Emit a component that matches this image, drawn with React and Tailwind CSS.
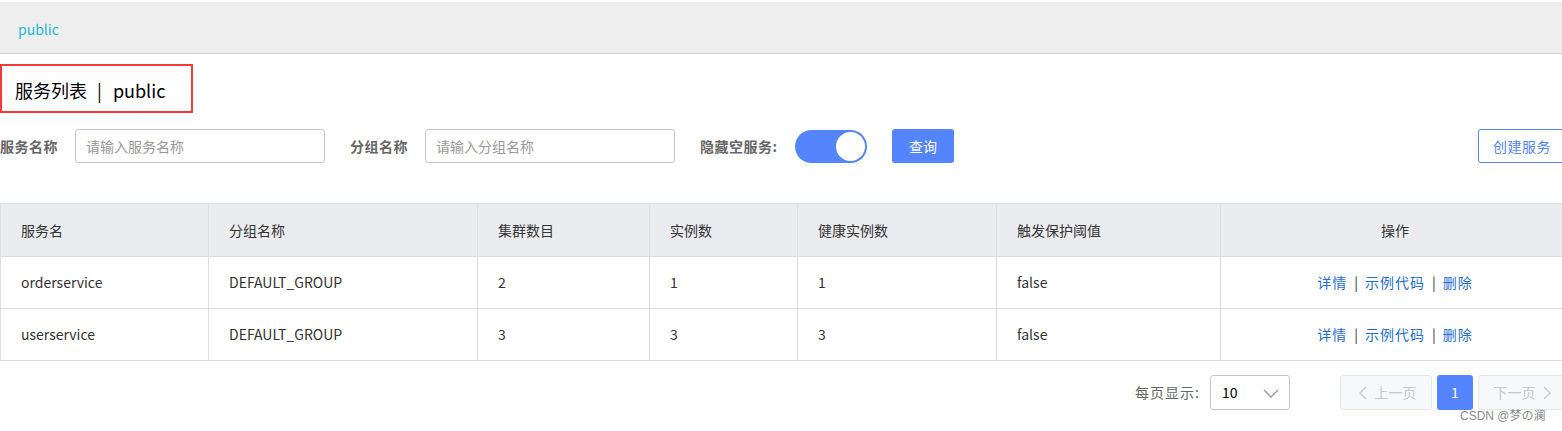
import React from 'react'

const rows = [
  { name: 'orderservice', group: 'DEFAULT_GROUP', clusters: 2, instances: 1, healthy: 1, threshold: 'false' },
  { name: 'userservice', group: 'DEFAULT_GROUP', clusters: 3, instances: 3, healthy: 3, threshold: 'false' },
]

const cols = [
  { title: '服务名', w: 'w-[208px]' },
  { title: '分组名称', w: 'w-[269px]' },
  { title: '集群数目', w: 'w-[172px]' },
  { title: '实例数', w: 'w-[148px]' },
  { title: '健康实例数', w: 'w-[199px]' },
  { title: '触发保护阈值', w: 'w-[224px]' },
]

const Chevron = ({ dir }) => {
  // thin chevrons like the console's pager
  const pts = {
    left: '10,2 4,8 10,14',
    right: '5,2 11,8 5,14',
    down: '1,5 8,12 15,5',
  }[dir]
  return (
    <svg width="16" height="16" viewBox="0 0 16 16" className="shrink-0">
      <polyline points={pts} fill="none" stroke="currentColor" strokeWidth="1.3" />
    </svg>
  )
}

const App = () => {
  return (
    <div className="relative w-[1562px] h-[431px] overflow-hidden bg-white text-[#333] text-[14px] font-['Noto_Sans_CJK_SC','Noto_Sans',sans-serif]">
      {/* breadcrumb bar */}
      <div className="mt-[2px] h-[52px] bg-[#eeeeee] border-b border-[#cfcfcf] flex items-center pl-[18px] pt-[3px]">
        <span className="text-[#1cb8d6]">public</span>
      </div>

      {/* page title */}
      <div className="mt-[10px] w-[193px] h-[49px] border-2 border-[#f53a3a] flex items-center pl-[13px] pt-[3px] text-[18px] text-black">
        服务列表<span className="ml-[10px] mr-[11px]">|</span>public
      </div>

      {/* filters */}
      <div className="mt-[16px] h-[34px] flex items-center">
        <span className="w-[75px] font-bold text-[#666] tracking-[0.5px]">服务名称</span>
        <div className="w-[250px] h-[34px] border border-[#c4c6cf] rounded-[3px] flex items-center px-[10px] text-[#999]">
          请输入服务名称
        </div>
        <span className="ml-[25px] w-[75px] font-bold text-[#666] tracking-[0.5px]">分组名称</span>
        <div className="w-[250px] h-[34px] border border-[#c4c6cf] rounded-[3px] flex items-center px-[10px] text-[#999]">
          请输入分组名称
        </div>
        <span className="ml-[25px] w-[95px] font-bold text-[#666] tracking-[0.5px]">隐藏空服务:</span>
        <div className="w-[72px] h-[33px] rounded-full bg-[#5584ff] flex items-center justify-end p-[2px]">
          <div className="w-[29px] h-[29px] rounded-full bg-white" />
        </div>
        <button className="ml-[25px] w-[62px] h-[34px] rounded-[3px] bg-[#5584ff] text-white">查询</button>
        <div className="flex-1" />
        <button className="w-[88px] h-[34px] shrink-0 rounded-[3px] border border-[#5584ff] text-[#5584ff] bg-white mr-[-4px] whitespace-nowrap tracking-[0.5px]">
          创建服务
        </button>
      </div>

      {/* service table */}
      <table className="mt-[40px] w-[1570px] border-collapse table-fixed">
        <thead>
          <tr className="h-[53px] bg-[#ebecf0]">
            {cols.map((c) => (
              <th key={c.title} className={`${c.w} border border-[#dcdee3] font-normal text-left pl-[20px]`}>
                {c.title}
              </th>
            ))}
            <th className="border border-[#dcdee3] font-normal text-center">操作</th>
          </tr>
        </thead>
        <tbody>
          {rows.map((r) => (
            <tr key={r.name} className="h-[52px]">
              <td className="border border-[#dcdee3] pl-[20px]">{r.name}</td>
              <td className="border border-[#dcdee3] pl-[20px]">{r.group}</td>
              <td className="border border-[#dcdee3] pl-[20px]">{r.clusters}</td>
              <td className="border border-[#dcdee3] pl-[20px]">{r.instances}</td>
              <td className="border border-[#dcdee3] pl-[20px]">{r.healthy}</td>
              <td className="border border-[#dcdee3] pl-[20px]">{r.threshold}</td>
              <td className="border border-[#dcdee3] text-center">
                <span className="text-[#1f6fd6] tracking-[1px]">详情</span>
                <span className="mx-[7px]">|</span>
                <span className="text-[#1f6fd6] tracking-[1px]">示例代码</span>
                <span className="mx-[7px]">|</span>
                <span className="text-[#1f6fd6] tracking-[1px]">删除</span>
              </td>
            </tr>
          ))}
        </tbody>
      </table>

      {/* pagination */}
      <div className="mt-[14px] h-[35px] flex items-center justify-end">
        <span className="text-[#666] tracking-[1px]">每页显示:</span>
        <div className="ml-[10px] w-[80px] h-[35px] border border-[#c4c6cf] rounded-[3px] flex items-center justify-between pl-[11px] pr-[10px]">
          <span className="text-black">10</span>
          <span className="text-[#999]"><Chevron dir="down" /></span>
        </div>
        <button className="ml-[50px] w-[92px] h-[35px] rounded-[3px] border border-[#e6e7eb] bg-[#f7f8fa] text-[#c8c8c8] flex items-center justify-center gap-[3px]">
          <Chevron dir="left" />上一页
        </button>
        <button className="ml-[5px] w-[36px] h-[35px] rounded-[3px] bg-[#5584ff] text-white">1</button>
        <button className="ml-[5px] mr-[-8px] w-[92px] h-[35px] rounded-[3px] border border-[#e6e7eb] bg-[#f7f8fa] text-[#c8c8c8] flex items-center justify-center gap-[3px]">
          下一页<Chevron dir="right" />
        </button>
      </div>

      {/* watermark */}
      <span className="absolute left-[1460px] top-[407px] text-[12px] text-[#8a8a8a] font-['Liberation_Sans','Noto_Sans_CJK_SC',sans-serif]">
        CSDN @梦の澜
      </span>
    </div>
  )
}

export default App
